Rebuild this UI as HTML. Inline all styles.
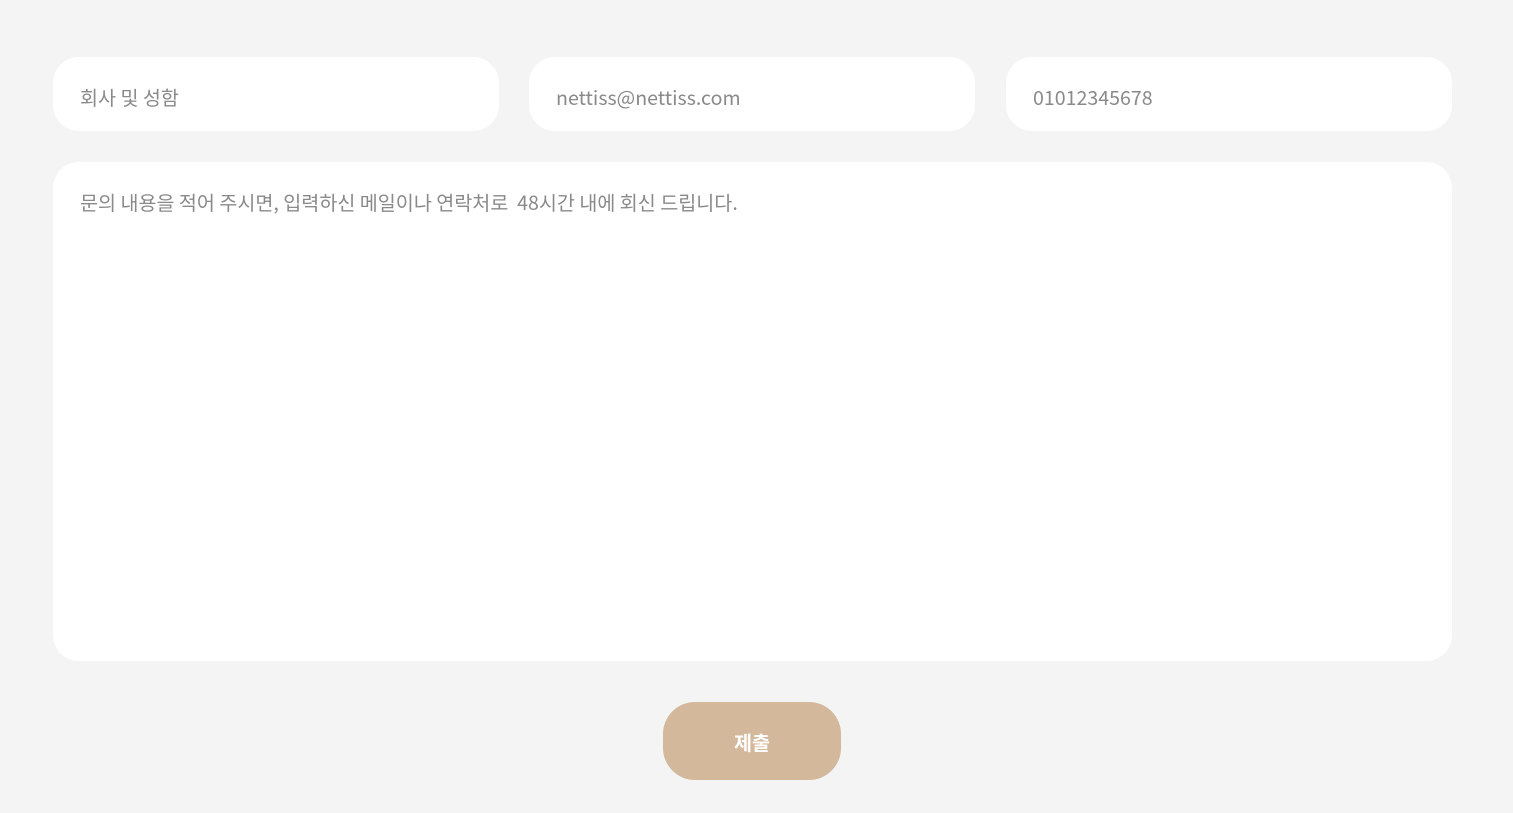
<!DOCTYPE html><html><head><meta charset="utf-8"><style>
body{margin:0;background:#f4f4f4;width:1513px;height:813px;position:relative;font-family:"Noto Sans CJK KR",sans-serif;overflow:hidden}
.b{position:absolute;background:#fff;border-radius:26px;color:#8a8a8a;font-size:19.6px;box-sizing:border-box;padding-left:27px}
.i{top:57px;height:74px;width:446px;line-height:80px}
.btn{position:absolute;left:663px;top:702px;width:178px;height:78px;border-radius:32px;background:#d3b89b;color:#fff;font-weight:bold;font-size:19.6px;text-align:center;line-height:80px}
</style></head><body>
<div class="b i" style="left:53px">회사 및 성함</div>
<div class="b i" style="left:529px">nettiss@nettiss.com</div>
<div class="b i" style="left:1006px">01012345678</div>
<div class="b" style="left:53px;top:162px;width:1399px;height:499px;padding-top:26px;line-height:28px">문의 내용을 적어 주시면, 입력하신 메일이나 연락처로&nbsp; 48시간 내에 회신 드립니다.</div>
<div class="btn">제출</div>
</body></html>
